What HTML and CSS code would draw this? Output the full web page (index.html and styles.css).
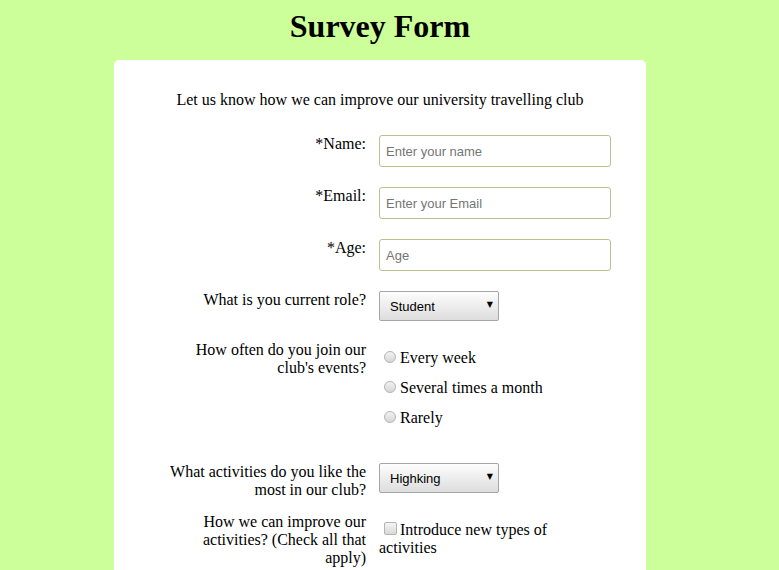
FILE: index.html
```html
<!DOCTYPE html>
<html lang="en">
<head>
<meta charset="utf-8">
<title>Survey Form</title>
<link rel="stylesheet" href="styles.css">
</head>
<body>
<div class="page">
  <h1 class="title">Survey Form</h1>
  <form class="card">
    <p class="intro">Let us know how we can improve our university travelling club</p>

    <div class="row">
      <label class="label" for="name">*Name:</label>
      <div class="control"><input class="field" id="name" type="text" placeholder="Enter your name"></div>
    </div>

    <div class="row">
      <label class="label" for="email">*Email:</label>
      <div class="control"><input class="field" id="email" type="email" placeholder="Enter your Email"></div>
    </div>

    <div class="row">
      <label class="label" for="age">*Age:</label>
      <div class="control"><input class="field" id="age" type="number" placeholder="Age"></div>
    </div>

    <div class="row">
      <label class="label" for="role">What is you current role?</label>
      <div class="control">
        <span class="select-wrap">
          <select class="select" id="role">
            <option>Student</option>
            <option>Alumni</option>
            <option>Staff</option>
          </select>
        </span>
      </div>
    </div>

    <div class="row">
      <div class="label">How often do you join our club's events?</div>
      <div class="control radio-group">
        <label class="option"><input class="radio" type="radio" name="freq">Every week</label>
        <label class="option"><input class="radio" type="radio" name="freq">Several times a month</label>
        <label class="option"><input class="radio" type="radio" name="freq">Rarely</label>
      </div>
    </div>

    <div class="row row-tight">
      <label class="label" for="act">What activities do you like the most in our club?</label>
      <div class="control">
        <span class="select-wrap">
          <select class="select" id="act">
            <option>Highking</option>
            <option>Camping</option>
          </select>
        </span>
      </div>
    </div>

    <div class="row">
      <div class="label">How we can improve our activities? (Check all that apply)</div>
      <div class="control check-group">
        <label class="check-option"><input class="checkbox" type="checkbox">Introduce new types of activities</label>
      </div>
    </div>
  </form>
</div>
</body>
</html>
```

FILE: styles.css
```css
html, body {
  margin: 0;
  padding: 0;
}

body {
  background: #ccff99;
  font-family: "Liberation Serif", "Times New Roman", serif;
  font-size: 16px;
  color: #000;
}

.page {
  width: 760px;
  padding-top: 8px;
}

.title {
  margin: 0;
  text-align: center;
  font-size: 32px;
  font-weight: bold;
}

.card {
  width: 532px;
  margin: 15px auto 0;
  background: #fff;
  border-radius: 5px;
  padding: 31px 0 30px;
  box-sizing: border-box;
}

.intro {
  margin: 0 0 26px;
  text-align: center;
}

.row {
  display: grid;
  grid-template-columns: 200px 232px;
  column-gap: 13px;
  padding-left: 52px;
  margin-bottom: 20px;
  align-items: start;
}

.row-tight {
  margin-bottom: 14px;
}

.label {
  text-align: right;
}

.field {
  display: block;
  width: 232px;
  height: 32px;
  box-sizing: border-box;
  margin: 0;
  border: 1px solid #bac18f;
  border-radius: 3px;
  padding: 0 6px;
  font-family: "Liberation Sans", Arial, sans-serif;
  font-size: 13px;
  background: #fff;
}

.field::placeholder {
  color: #757575;
}

.select-wrap {
  position: relative;
  display: inline-block;
}

.select-wrap::after {
  content: "\25BC";
  position: absolute;
  right: 6px;
  top: 9px;
  font-family: "DejaVu Sans", sans-serif;
  font-size: 8px;
  color: #000;
  pointer-events: none;
}

.select {
  -webkit-appearance: none;
  appearance: none;
  display: block;
  width: 120px;
  height: 30px;
  margin: 0;
  box-sizing: border-box;
  border: 1px solid #a6a6a6;
  border-radius: 2px;
  padding: 0 0 0 10px;
  font-family: "Liberation Sans", Arial, sans-serif;
  font-size: 13px;
  color: #000;
  background: linear-gradient(#fdfdfd, #dddddd);
}

.radio-group {
  padding: 2px 0 10px;
}

.option {
  display: block;
  line-height: 30px;
}

.radio {
  -webkit-appearance: none;
  appearance: none;
  width: 12px;
  height: 12px;
  margin: 0 4px 0 5px;
  border: 1px solid #b4b4b4;
  border-radius: 50%;
  box-sizing: border-box;
  background: linear-gradient(#f2f2f2, #d6d6d6);
  vertical-align: baseline;
}

.check-group {
  padding-top: 8px;
  width: 215px;
}

.checkbox {
  -webkit-appearance: none;
  appearance: none;
  width: 13px;
  height: 13px;
  margin: 0 3px 0 5px;
  border: 1px solid #b4b4b4;
  border-radius: 2px;
  box-sizing: border-box;
  background: linear-gradient(#f4f4f4, #dadada);
  vertical-align: baseline;
}
```
